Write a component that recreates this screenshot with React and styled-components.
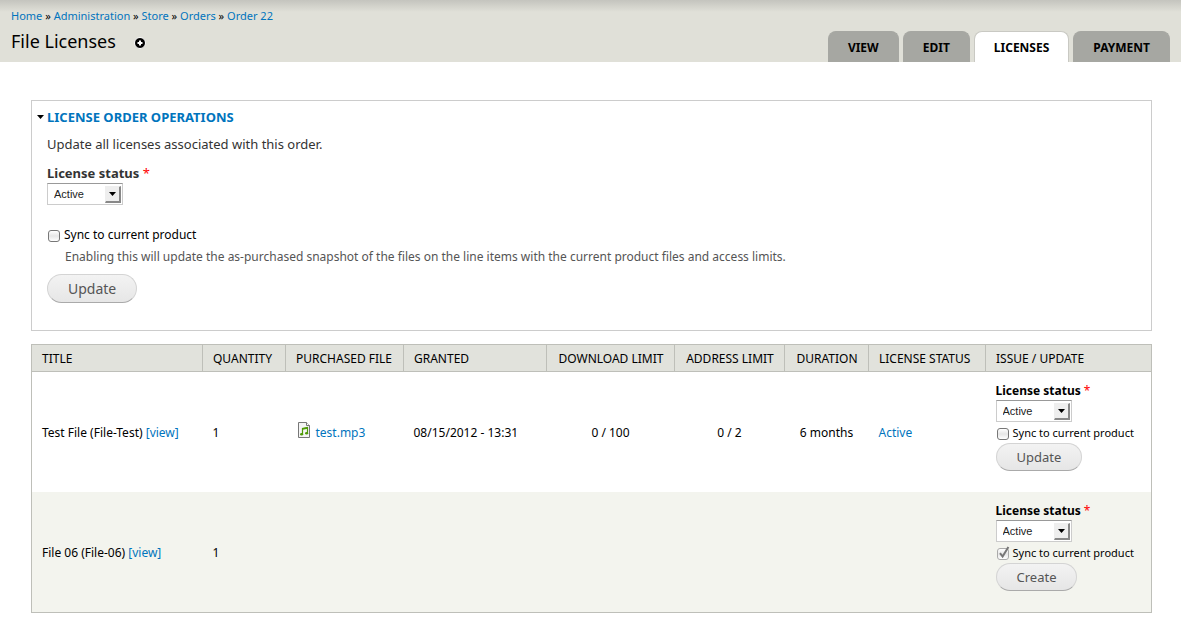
import React, { useId, useState } from "react";
import styled, { createGlobalStyle } from "styled-components";

const crumbs = ["Home", "Administration", "Store", "Orders", "Order 22"];
const tabs = ["View", "Edit", "Licenses", "Payment"];

const columns = [
  { title: "Title" },
  { title: "Quantity", width: 83 },
  { title: "Purchased file", width: 118 },
  { title: "Granted", width: 143 },
  { title: "Download limit", width: 128, center: true },
  { title: "Address limit", width: 110, center: true },
  { title: "Duration", width: 84, center: true },
  { title: "License status", width: 117 },
  { title: "Issue / Update", width: 166 },
];

const licenses = [
  {
    title: "Test File (File-Test)",
    quantity: 1,
    file: "test.mp3",
    granted: "08/15/2012 - 13:31",
    downloads: "0 / 100",
    addresses: "0 / 2",
    duration: "6 months",
    status: "Active",
    action: "Update",
  },
  { title: "File 06 (File-06)", quantity: 1, action: "Create", locked: true },
];

function StatusSelect({ compact }) {
  const id = useId();
  return (
    <>
      <FieldLabel htmlFor={id} $compact={compact}>
        License status <Required>*</Required>
      </FieldLabel>
      <SelectBox>
        <Select id={id} defaultValue="Active">
          <option>Pending</option>
          <option>Active</option>
          <option>Revoked</option>
        </Select>
        <SelectArrow aria-hidden="true">
          <svg width="7" height="4" viewBox="0 0 7 4">
            <path d="M0 0h7L3.5 4z" fill="#000" />
          </svg>
        </SelectArrow>
      </SelectBox>
    </>
  );
}

function SyncCheckbox({ compact, locked }) {
  const [checked, setChecked] = useState(Boolean(locked));
  return (
    <CheckLabel $compact={compact}>
      <CheckBox>
        <CheckInput
          type="checkbox"
          checked={checked}
          disabled={locked}
          onChange={(e) => setChecked(e.target.checked)}
        />
        {checked && (
          <CheckMark width="13" height="14" viewBox="0 0 13 14" aria-hidden="true">
            <path d="M3 7.2l2.6 3.4L11.4 1" fill="none" stroke="#777" strokeWidth="2" />
          </CheckMark>
        )}
      </CheckBox>
      Sync to current product
    </CheckLabel>
  );
}

function AudioIcon() {
  return (
    <svg width="12" height="16" viewBox="0 0 12 16" aria-hidden="true">
      <path d="M.5.5h8l3 3v12H.5z" fill="#f4f4f4" stroke="#777" />
      <path d="M8.5.5v3h3" fill="#fff" stroke="#777" />
      <path d="M4.5 12V6.5l5-1V11" fill="none" stroke="#4e9a06" strokeWidth="1.2" />
      <path d="M4.5 7l5-1" stroke="#4e9a06" strokeWidth="1.6" />
      <ellipse cx="3.6" cy="12.2" rx="1.6" ry="1.3" fill="#4e9a06" />
      <ellipse cx="8.6" cy="11.2" rx="1.6" ry="1.3" fill="#4e9a06" />
    </svg>
  );
}

function LicenseRow({ item }) {
  return (
    <Row>
      <Cell>
        {item.title} <Link href="#view">[view]</Link>
      </Cell>
      <Cell>{item.quantity}</Cell>
      <Cell>
        {item.file && (
          <FileName>
            <AudioIcon />
            <Link href="#file">{item.file}</Link>
          </FileName>
        )}
      </Cell>
      <Cell>{item.granted}</Cell>
      <Cell $center>{item.downloads}</Cell>
      <Cell $center>{item.addresses}</Cell>
      <Cell $center>{item.duration}</Cell>
      <Cell>{item.status && <Link href="#status">{item.status}</Link>}</Cell>
      <FormCell>
        <StatusSelect compact />
        <SyncCheckbox compact locked={item.locked} />
        <Button type="button" $compact>
          {item.action}
        </Button>
      </FormCell>
    </Row>
  );
}

export default function App() {
  const [open, setOpen] = useState(true);
  return (
    <>
      <GlobalStyle />
      <Header>
        <Heading>
          <Breadcrumb aria-label="Breadcrumb">
            {crumbs.map((name, i) => (
              <React.Fragment key={name}>
                {i > 0 && " » "}
                <Link href="#crumb">{name}</Link>
              </React.Fragment>
            ))}
          </Breadcrumb>
          <TitleLine>
            <Title>File Licenses</Title>
            <ShortcutButton type="button" aria-label="Add to shortcuts">
              <svg width="12" height="12" viewBox="0 0 12 12">
                <circle cx="6" cy="6" r="5.5" fill="#000" stroke="#fff" />
                <path d="M6 3.5v5M3.5 6h5" stroke="#fff" strokeWidth="2" />
              </svg>
            </ShortcutButton>
          </TitleLine>
        </Heading>
        <Tabs>
          {tabs.map((name) => (
            <Tab key={name} href="#tab" $active={name === "Licenses"}>
              {name}
            </Tab>
          ))}
        </Tabs>
      </Header>
      <Content>
        <Panel>
          <Legend type="button" aria-expanded={open} onClick={() => setOpen(!open)}>
            <svg width="7" height="4" viewBox="0 0 7 4" aria-hidden="true">
              <path d="M0 0h7L3.5 4z" fill="#000" />
            </svg>
            License order operations
          </Legend>
          {open && (
            <PanelBody>
              <Intro>Update all licenses associated with this order.</Intro>
              <StatusSelect />
              <SyncCheckbox />
              <Description>
                Enabling this will update the as-purchased snapshot of the files on the
                line items with the current product files and access limits.
              </Description>
              <Button type="button">Update</Button>
            </PanelBody>
          )}
        </Panel>
        <Table>
          <colgroup>
            {columns.map((col) => (
              <col key={col.title} width={col.width} />
            ))}
          </colgroup>
          <thead>
            <tr>
              {columns.map((col) => (
                <HeadCell key={col.title} scope="col" $center={col.center}>
                  {col.title}
                </HeadCell>
              ))}
            </tr>
          </thead>
          <tbody>
            {licenses.map((item) => (
              <LicenseRow key={item.title} item={item} />
            ))}
          </tbody>
        </Table>
      </Content>
    </>
  );
}

const GlobalStyle = createGlobalStyle`
  * {
    box-sizing: border-box;
  }
  body {
    margin: 0;
    background: #fff;
    color: #000;
    font-family: "Lucida Grande", "Noto Sans", sans-serif;
    font-size: 12px;
    line-height: 18px;
  }
`;

const Link = styled.a`
  color: #0074bd;
  text-decoration: none;
`;

const Header = styled.header`
  display: flex;
  justify-content: space-between;
  align-items: flex-end;
  height: 62px;
  padding: 0 11px;
  background: linear-gradient(#c4c4be, #e0e0d8 12px);
`;

const Heading = styled.div`
  align-self: flex-start;
  padding-top: 7px;
`;

const Breadcrumb = styled.nav`
  font-size: 11px;
  white-space: nowrap;
`;

const TitleLine = styled.div`
  display: flex;
  align-items: center;
  gap: 18px;
  padding-top: 3px;
`;

const Title = styled.h1`
  margin: 0;
  font-size: 18px;
  line-height: 26px;
  font-weight: 400;
`;

const ShortcutButton = styled.button`
  display: flex;
  padding: 4px 0 0;
  border: 0;
  background: none;
`;

const Tabs = styled.nav`
  display: flex;
  gap: 4px;
`;

const Tab = styled.a`
  height: 31px;
  padding: 0 19px;
  border: 1px solid ${(p) => (p.$active ? "#c9c9c3" : "#a6a7a2")};
  border-bottom: 0;
  border-radius: 8px 8px 0 0;
  background: ${(p) => (p.$active ? "#fff" : "#a6a7a2")};
  color: #000;
  font-size: 12px;
  font-weight: 700;
  line-height: 32px;
  text-decoration: none;
  text-transform: uppercase;
`;

const Content = styled.main`
  padding: 38px 29px 19px 31px;
`;

const Panel = styled.section`
  padding: 7px 15px 27px 5px;
  border: 1px solid #ccc;
`;

const Legend = styled.button`
  display: flex;
  align-items: center;
  gap: 3px;
  padding: 0;
  border: 0;
  background: none;
  color: #0074bd;
  font: inherit;
  font-size: 13px;
  font-weight: 700;
  text-transform: uppercase;
`;

const PanelBody = styled.div`
  padding-left: 10px;
  color: #333;
`;

const Intro = styled.p`
  margin: 9px 0 11px;
  font-size: 13px;
`;

const FieldLabel = styled.label`
  display: block;
  padding-bottom: ${(p) => (p.$compact ? 0 : 1)}px;
  font-size: ${(p) => (p.$compact ? 12 : 13)}px;
  font-weight: 700;
`;

const Required = styled.span`
  color: #f00;
  font-weight: 400;
`;

const SelectBox = styled.span`
  display: block;
  position: relative;
  width: 76px;
  height: 22px;
`;

const Select = styled.select`
  appearance: none;
  display: block;
  width: 100%;
  height: 100%;
  padding: 0 6px;
  border: 1px solid #ccc;
  border-top-color: #999;
  border-radius: 0;
  background: #fff;
  color: #222;
  font-family: "Liberation Sans", Arial, sans-serif;
  font-size: 11px;
`;

const SelectArrow = styled.span`
  position: absolute;
  top: 3px;
  right: 2px;
  display: flex;
  align-items: center;
  justify-content: center;
  width: 16px;
  height: 17px;
  border: 1px solid #eee;
  border-right: 2px solid #888;
  border-bottom: 2px solid #888;
  background: #eee;
  pointer-events: none;
`;

const CheckLabel = styled.label`
  display: flex;
  align-items: center;
  gap: 4px;
  width: max-content;
  margin-top: ${(p) => (p.$compact ? 2 : 21)}px;
  padding-left: 1px;
  color: #000;
  font-size: ${(p) => (p.$compact ? 11 : 12)}px;
`;

const CheckBox = styled.span`
  position: relative;
  display: flex;
  padding-top: 2px;
`;

const CheckInput = styled.input`
  appearance: none;
  width: 12px;
  height: 12px;
  margin: 0;
  border: 1px solid #777;
  border-radius: 3px;
  background: linear-gradient(#fff, #e6e6e6 50%, #fff);

  &:disabled {
    border-color: #aaa;
  }
`;

const CheckMark = styled.svg`
  position: absolute;
  top: 0;
  left: 0;
  pointer-events: none;
`;

const Description = styled.p`
  margin: 4px 0 8px 18px;
  color: #555;
  font-size: 12px;
`;

const Button = styled.button`
  display: block;
  height: ${(p) => (p.$compact ? 28 : 29)}px;
  padding: 0 20px;
  border: 1px solid #d4d4d4;
  border-bottom-color: #aaa;
  border-radius: 15px;
  background: linear-gradient(#f3f3f3, #e6e6e6);
  color: #555;
  font-family: inherit;
  font-size: ${(p) => (p.$compact ? 13 : 14)}px;
`;

const Table = styled.table`
  width: 100%;
  margin-top: 13px;
  table-layout: fixed;
  border: 1px solid #bebfb9;
  border-collapse: collapse;
`;

const HeadCell = styled.th`
  height: 27px;
  padding: 2px 9px 0 10px;
  border: 1px solid #bebfb9;
  background: #e1e2dc;
  font-weight: 400;
  text-align: ${(p) => (p.$center ? "center" : "left")};
  text-transform: uppercase;
  white-space: nowrap;
`;

const Row = styled.tr`
  height: 120px;

  &:nth-child(even) {
    height: 121px;
    background: #f3f4ee;
  }
`;

const Cell = styled.td`
  padding: 2px 10px 0;
  text-align: ${(p) => (p.$center ? "center" : "left")};
  vertical-align: middle;
  white-space: nowrap;
`;

const FormCell = styled(Cell)`
  padding: 0 10px 11px;

  button {
    margin-top: 1px;
  }
`;

const FileName = styled.span`
  display: flex;
  align-items: center;
  gap: 6px;
  padding-left: 2px;

  svg {
    margin-bottom: 6px;
  }
`;
